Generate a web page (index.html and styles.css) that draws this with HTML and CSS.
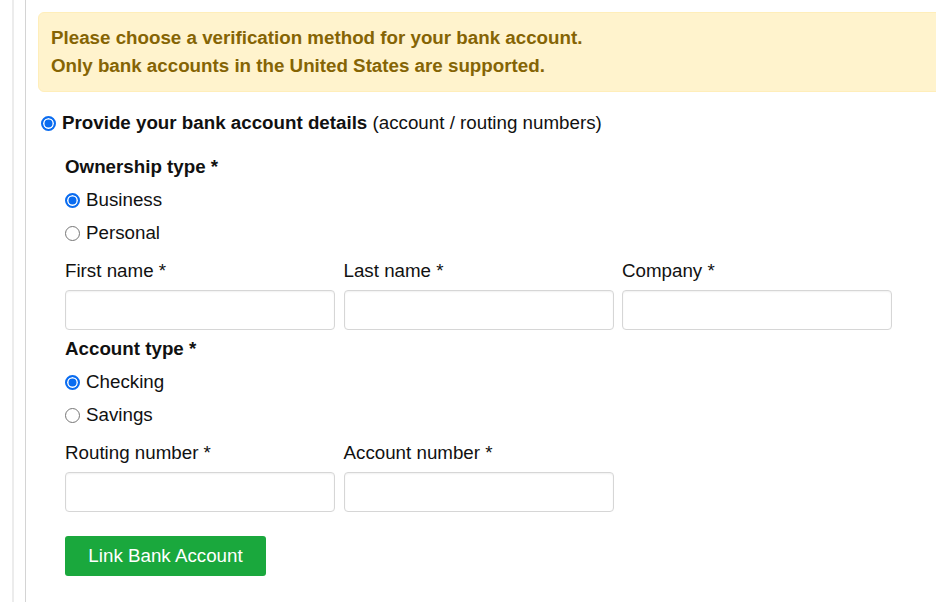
FILE: index.html
```html
<!DOCTYPE html>
<html lang="en">
<head>
<meta charset="utf-8">
<title>Bank account verification</title>
<link rel="stylesheet" href="styles.css">
</head>
<body>
<div class="page">
  <div class="stripe"></div>
  <main class="main">
    <div class="alert">
      <div>Please choose a verification method for your bank account.</div>
      <div>Only bank accounts in the United States are supported.</div>
    </div>

    <label class="method">
      <input type="radio" name="method" class="radio" checked>
      <span><b>Provide your bank account details</b> (account / routing numbers)</span>
    </label>

    <form class="form">
      <div class="group-title">Ownership type *</div>
      <label class="option"><input type="radio" name="owner" class="radio" checked><span>Business</span></label>
      <label class="option"><input type="radio" name="owner" class="radio"><span>Personal</span></label>

      <div class="fields">
        <div class="field"><label class="field-label">First name *</label><input class="text" type="text"></div>
        <div class="field"><label class="field-label">Last name *</label><input class="text" type="text"></div>
        <div class="field"><label class="field-label">Company *</label><input class="text" type="text"></div>
      </div>

      <div class="group-title">Account type *</div>
      <label class="option"><input type="radio" name="acct" class="radio" checked><span>Checking</span></label>
      <label class="option"><input type="radio" name="acct" class="radio"><span>Savings</span></label>

      <div class="fields">
        <div class="field"><label class="field-label">Routing number *</label><input class="text" type="text"></div>
        <div class="field"><label class="field-label">Account number *</label><input class="text" type="text"></div>
      </div>

      <button type="button" class="btn">Link Bank Account</button>
    </form>
  </main>
</div>
</body>
</html>
```

FILE: styles.css
```css
* { box-sizing: border-box; }
html, body { margin: 0; padding: 0; background: #fff; }
body {
  font-family: "Liberation Sans", Arial, sans-serif;
  font-size: 18.75px;
  color: #111;
  overflow: hidden;
  height: 602px;
}
.page {
  display: flex;
  height: 602px;
}
.stripe {
  width: 2px;
  margin-left: 12px;
  background: #ececec;
}
.main {
  flex: 1;
  margin-left: 11px;
  border-left: 1px solid #d4d4d4;
  padding: 12px 0 0 12px;
  overflow: hidden;
}
.alert {
  margin-right: -30px;
  background: #fff3cd;
  border: 1px solid #ffeeba;
  border-radius: 6px;
  color: #856404;
  font-weight: bold;
  line-height: 28px;
  padding: 11px 12px 11px 12px;
}
.method {
  display: flex;
  align-items: center;
  gap: 6px;
  margin: 17px 0 0 3px;
  height: 28px;
}
.radio {
  -webkit-appearance: none;
  appearance: none;
  margin: 0;
  width: 15px;
  height: 15px;
  border-radius: 50%;
  border: 1px solid #767676;
  background: #fff;
  flex: none;
}
.radio:checked {
  border: 2px solid #0a6cf0;
  background: #0a6cf0;
  box-shadow: inset 0 0 0 1.5px #fff;
}
.form {
  padding-left: 27px;
  margin-top: 16px;
}
.group-title {
  font-weight: bold;
  line-height: 28px;
  margin-bottom: 2.5px;
}
.option {
  display: flex;
  align-items: center;
  gap: 6px;
  height: 33px;
}
.fields {
  display: grid;
  grid-template-columns: repeat(3, 270px);
  column-gap: 8.5px;
  margin-top: 7.5px;
  margin-bottom: 5px;
}
.field {
  display: flex;
  flex-direction: column;
}
.field-label {
  line-height: 28px;
  margin-bottom: 5px;
}
.text {
  height: 40px;
  width: 100%;
  border: 1px solid #d6d6d6;
  border-radius: 4px;
  box-shadow: inset 0 1px 2px rgba(0,0,0,0.06);
  background: #fff;
  font: inherit;
  padding: 0 10px;
}
.btn {
  display: block;
  margin-top: 24px;
  width: 201px;
  height: 40px;
  border: none;
  border-radius: 3px;
  background: #1aa83d;
  color: #fff;
  font: inherit;
  padding: 0;
}
```
